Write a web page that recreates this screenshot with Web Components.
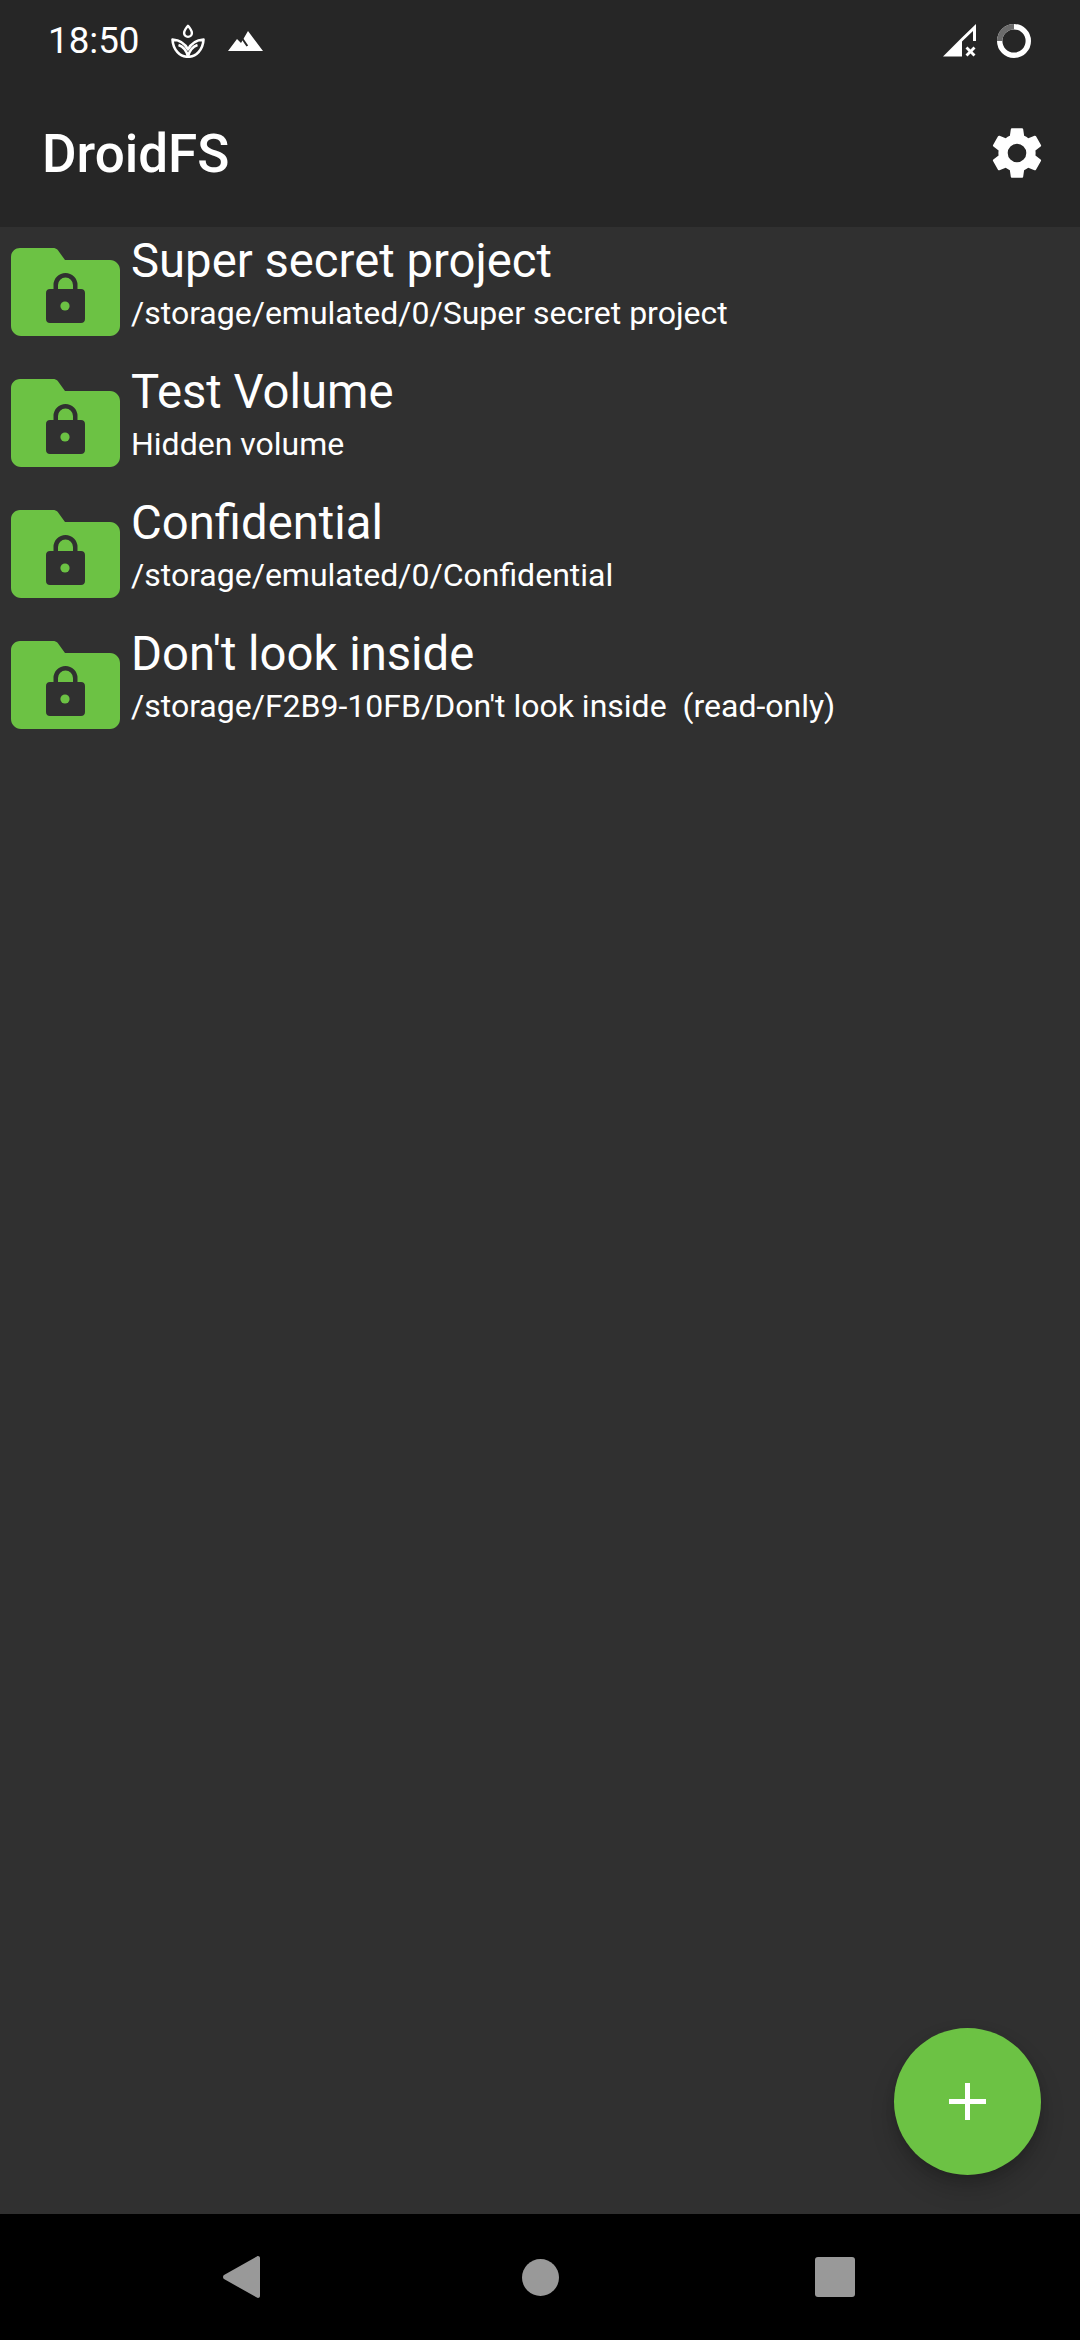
<!DOCTYPE html>
<html>
<head>
<meta charset="utf-8">
<title>DroidFS</title>
<style>
html, body { margin: 0; height: 100%; background: #303030; }
body { font-family: Roboto, sans-serif; color: #fff; }
</style>
</head>
<body>
<droid-app>
    <volume-row name="Super secret project" path="/storage/emulated/0/Super secret project"></volume-row>
    <volume-row name="Test Volume" path="Hidden volume"></volume-row>
    <volume-row name="Confidential" path="/storage/emulated/0/Confidential"></volume-row>
    <volume-row name="Don't look inside" path="/storage/F2B9-10FB/Don't look inside  (read-only)"></volume-row>
</droid-app>

<script>
class StatusBar extends HTMLElement {
    constructor() {
        super();
        this.attachShadow({ mode: 'open' }).innerHTML = `
            <style>
                :host { display: flex; align-items: center; height: 81px; padding: 0 49px 0 48px; }
                .time { font-size: 36.75px; width: 123px; }
                svg { display: block; fill: #fff; }
                .spacer { flex: 1; }
                .plant { margin-right: 23px; }
                .signal { margin-right: 20px; }
            </style>
            <span class="time">18:50</span>
            <svg class="plant" width="34" height="34" viewBox="0 0 34 34">
                <path fill="none" stroke="#fff" stroke-width="2.400" stroke-linejoin="round" d="M17 1.800c2.700 3.200 3.900 5.300 3.900 7.200a3.900 3.900 0 0 1-7.800 0c0-1.900 1.200-4 3.900-7.200z"/>
                <path fill="none" stroke="#fff" stroke-width="2.600" stroke-linejoin="round" d="M1.500 15.500C2 26 9 32.800 17 32.800 25 32.800 32 26 32.500 15.500 26 16 20 19.500 17 25.500 14 19.500 8 16 1.500 15.500z"/>
                <path fill="none" stroke="#fff" stroke-width="2.400" d="M7.500 21c4.500 1.500 8 5.500 9.500 11.500M26.500 21c-4.500 1.500-8 5.500-9.500 11.500"/>
            </svg>
            <svg width="35" height="20" viewBox="0 0 35 20">
                <path d="M0 20 9 8l4 4L20 0l15 20z"/>
                <path fill="none" stroke="#262626" stroke-width="2" d="M13.700 6.700 19.300 15"/>
            </svg>
            <span class="spacer"></span>
            <svg class="signal" width="34" height="34" viewBox="0 0 34 34">
                <path d="M0 32.500 19 13.500v19z"/>
                <path d="M19 13.500 33 0v17h-3V7L19 17.500z"/>
                <path d="M22.500 24.500l2-2 3 3 3-3 2 2-3 3 3 3-2 2-3-3-3 3-2-2 3-3z"/>
            </svg>
            <svg width="34" height="34" viewBox="0 0 34 34">
                <circle cx="17" cy="17" r="14.300" fill="none" stroke="#fff" stroke-width="5.400"/>
                <path d="M17 2.700A14.300 14.300 0 0 0 2.700 17" fill="none" stroke="#6b6b6b" stroke-width="5.400"/>
            </svg>
        `;
    }
}

class AppToolbar extends HTMLElement {
    constructor() {
        super();
        this.attachShadow({ mode: 'open' }).innerHTML = `
            <style>
                :host { display: flex; align-items: center; justify-content: space-between; height: 146px; padding: 0 32px 0 42px; }
                .title { font-size: 53px; font-weight: 500; }
                svg { display: block; fill: #fff; margin-top: -2px; }
            </style>
            <span class="title">${this.getAttribute('label') || 'DroidFS'}</span>
            <svg width="62" height="62" viewBox="0 0 24 24">
                <path d="M19.140 12.940c.04-.3.060-.61.060-.94 0-.32-.02-.64-.07-.94l2.030-1.580a.49.49 0 0 0 .12-.61l-1.920-3.320a.488.488 0 0 0-.59-.22l-2.390.96c-.5-.38-1.030-.7-1.620-.94l-.36-2.540a.484.484 0 0 0-.48-.41h-3.840c-.24 0-.43.170-.47.410l-.36 2.540c-.59.240-1.130.570-1.620.94l-2.390-.96c-.22-.08-.47 0-.59.220L2.740 8.870c-.12.210-.08.470.12.610l2.030 1.580c-.05.300-.09.630-.09.940s.02.640.07.940l-2.030 1.580a.49.49 0 0 0-.12.610l1.920 3.320c.12.220.37.290.59.220l2.390-.96c.5.380 1.030.70 1.620.94l.36 2.540c.05.240.24.410.48.410h3.840c.24 0 .44-.17.470-.41l.36-2.540c.59-.24 1.130-.56 1.620-.94l2.390.96c.22.080.47 0 .59-.22l1.920-3.320c.12-.22.070-.47-.12-.61l-2.010-1.580zM12 15.600A3.600 3.600 0 1 1 12 8.400a3.600 3.600 0 0 1 0 7.200z"/>
            </svg>
        `;
    }
}

class VolumeRow extends HTMLElement {
    constructor() {
        super();
        this.attachShadow({ mode: 'open' }).innerHTML = `
            <style>
                :host { display: flex; align-items: flex-start; height: 131px; padding-left: 11px; box-sizing: border-box; }
                svg { display: block; flex: none; margin: 21px 11px 0 0; }
                .text { display: flex; flex-direction: column; padding-top: 4px; }
                .name { font-size: 47.250px; line-height: 60px; }
                .path { font-size: 32px; line-height: 44px; white-space: pre; }
            </style>
            <svg width="109" height="88" viewBox="0 0 109 88">
                <path fill="#6cc244" d="M9 0h33c1.800 0 3.300.6 4.600 1.800L54 12h45c5.500 0 10 4.500 10 10v56c0 5.500-4.500 10-10 10H10C4.500 88 0 83.500 0 78V9C0 4 4 0 9 0z"/>
                <path fill="#303030" d="M42.500 41v-4a12 12 0 0 1 24 0v4h3.500c2.500 0 4 1.500 4 4v26c0 2.500-1.500 4-4 4H39c-2.500 0-4-1.500-4-4V45c0-2.500 1.500-4 4-4z"/>
                <path fill="#6cc244" d="M47 41v-4a7.500 7.500 0 0 1 15 0v4z"/>
                <circle cx="54" cy="58" r="4.600" fill="#6cc244"/>
            </svg>
            <div class="text">
                <span class="name"></span>
                <span class="path"></span>
            </div>
        `;
    }

    connectedCallback() {
        this.shadowRoot.querySelector('.name').textContent = this.getAttribute('name');
        this.shadowRoot.querySelector('.path').textContent = this.getAttribute('path');
    }
}

class AddButton extends HTMLElement {
    constructor() {
        super();
        this.attachShadow({ mode: 'open' }).innerHTML = `
            <style>
                :host { position: absolute; right: 39px; bottom: 39px; width: 147px; height: 147px; border-radius: 50%; background: #6cc244;
                    display: flex; align-items: center; justify-content: center;
                    box-shadow: 0 14px 24px rgba(0,0,0,.18), 0 4px 10px rgba(0,0,0,.12); }
                svg { display: block; fill: #fff; }
            </style>
            <svg width="37" height="37" viewBox="0 0 37 37"><path d="M16 0h5v16h16v5H21v16h-5V21H0v-5h16z"/></svg>
        `;
    }
}

class NavBar extends HTMLElement {
    constructor() {
        super();
        this.attachShadow({ mode: 'open' }).innerHTML = `
            <style>
                :host { display: flex; align-items: center; height: 126px; background: #000; padding-left: 223px; box-sizing: border-box; }
                svg { display: block; fill: #999; }
                .home { margin-left: 262px; }
                .recents { margin-left: 256px; }
            </style>
            <svg width="37" height="42" viewBox="0 0 37 42"><path d="M35 0c1.100 0 2 .9 2 2v38c0 1.100-.9 2-2 2-.4 0-.8-.1-1.100-.4L1 23c-1.300-.8-1.300-3.200 0-4L33.900.4C34.200.1 34.600 0 35 0z"/></svg>
            <svg class="home" width="37" height="37" viewBox="0 0 37 37"><circle cx="18.500" cy="18.500" r="18.500"/></svg>
            <svg class="recents" width="40" height="40" viewBox="0 0 40 40"><rect width="40" height="40" rx="3"/></svg>
        `;
    }
}

class DroidApp extends HTMLElement {
    constructor() {
        super();
        this.attachShadow({ mode: 'open' }).innerHTML = `
            <style>
                :host { display: flex; flex-direction: column; position: relative; height: 2340px; overflow: hidden; background: #303030; }
                header { background: #262626; flex: none; }
                main { position: relative; flex: 1; }
            </style>
            <header>
                <status-bar></status-bar>
                <app-toolbar label="DroidFS"></app-toolbar>
            </header>
            <main>
                <slot></slot>
                <add-button></add-button>
            </main>
            <nav-bar></nav-bar>
        `;
    }
}

customElements.define('status-bar', StatusBar);
customElements.define('app-toolbar', AppToolbar);
customElements.define('volume-row', VolumeRow);
customElements.define('add-button', AddButton);
customElements.define('nav-bar', NavBar);
customElements.define('droid-app', DroidApp);
</script>
</body>
</html>
